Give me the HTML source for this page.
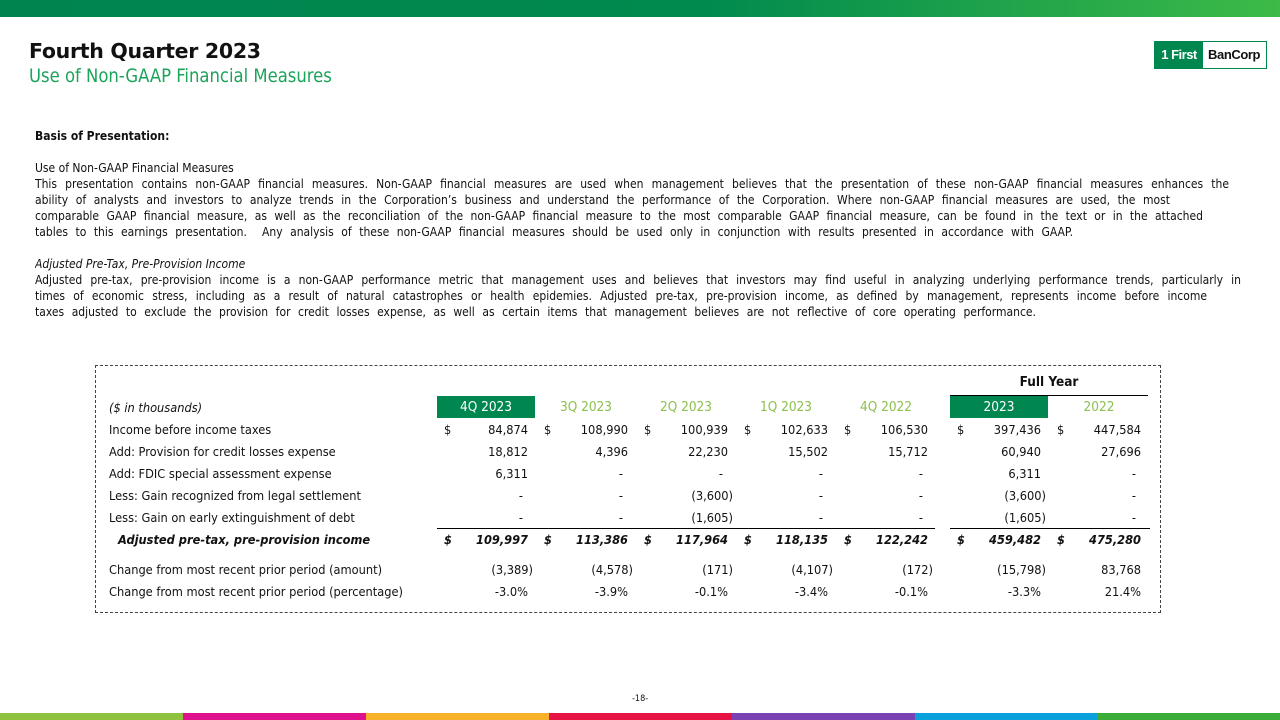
<!DOCTYPE html>
<html><head><meta charset="utf-8"><style>
*{margin:0;padding:0;box-sizing:border-box}
body{width:1280px;height:720px;position:relative;overflow:hidden;background:#fff;font-family:"DejaVu Sans Condensed","Liberation Sans",sans-serif;color:#111}
.a{position:absolute;white-space:nowrap}
.top{position:absolute;left:0;top:0;width:1280px;height:17px;background:linear-gradient(90deg,#00844f 0%,#008a4e 55%,#3dba48 100%)}
.t1{left:29px;top:39px;font-size:20.5px;font-weight:bold;font-family:"DejaVu Sans","Liberation Sans",sans-serif;letter-spacing:-0.3px}
.t2{left:29px;top:66px;font-size:18.3px;color:#1ba35a;font-family:"DejaVu Sans Condensed",sans-serif}
.p{position:absolute;left:35px;font-size:12px;line-height:16px;white-space:nowrap;text-align:justify;text-align-last:justify;overflow:hidden}
.box{position:absolute;left:95px;top:365px;width:1066px;height:248px;border:1px dashed #444}
.c{position:absolute;font-size:12.7px;height:22px;line-height:22px}
.hd{position:absolute;width:98px;height:22px;line-height:22px;text-align:center;font-size:13.5px;color:#8cc04f}
.g{background:#00874f;color:#fff}
.ln{position:absolute;height:1px;background:#000}
.bars div{position:absolute;top:713px;height:7px;width:183px}
</style></head><body>
<div class="top"></div>
<div class="a t1">Fourth Quarter 2023</div>
<div class="a t2">Use of Non-GAAP Financial Measures</div>
<div class="a" style="left:1154px;top:41px;width:113px;height:28px;border:1px solid #00874f;background:#fff">
<div style="position:absolute;left:0;top:0;width:48px;height:26px;background:#00874f;color:#fff;font:bold 13px/26px 'Liberation Sans',sans-serif;text-align:center;letter-spacing:-0.5px">1 First</div>
<div style="position:absolute;left:53px;top:0;font:bold 13px/26px 'Liberation Sans',sans-serif;color:#111;letter-spacing:-0.4px">BanCorp</div></div>

<div class="p" style="top:128px;font-weight:bold">Basis of Presentation:</div>
<div class="p" style="top:160px">Use of Non-GAAP Financial Measures</div>
<div class="p" style="top:176px;width:1194px">This presentation contains non-GAAP financial measures. Non-GAAP financial measures are used when management believes that the presentation of these non-GAAP financial measures enhances the</div>
<div class="p" style="top:192px;width:1135px">ability of analysts and investors to analyze trends in the Corporation’s business and understand the performance of the Corporation. Where non-GAAP financial measures are used, the most</div>
<div class="p" style="top:208px;width:1168px">comparable GAAP financial measure, as well as the reconciliation of the non-GAAP financial measure to the most comparable GAAP financial measure, can be found in the text or in the attached</div>
<div class="p" style="top:224px;width:1038px">tables to this earnings presentation.&nbsp; Any analysis of these non-GAAP financial measures should be used only in conjunction with results presented in accordance with GAAP.</div>
<div class="p" style="top:256px;font-style:italic">Adjusted Pre-Tax, Pre-Provision Income</div>
<div class="p" style="top:272px;width:1206px">Adjusted pre-tax, pre-provision income is a non-GAAP performance metric that management uses and believes that investors may find useful in analyzing underlying performance trends, particularly in</div>
<div class="p" style="top:288px;width:1172px">times of economic stress, including as a result of natural catastrophes or health epidemies. Adjusted pre-tax, pre-provision income, as defined by management, represents income before income</div>
<div class="p" style="top:304px;width:1001px">taxes adjusted to exclude the provision for credit losses expense, as well as certain items that management believes are not reflective of core operating performance.</div>

<div class="box"></div>
<div class="a" style="left:950px;top:374px;width:198px;text-align:center;font-size:13.5px;font-weight:bold">Full Year</div>
<div class="ln" style="left:950px;top:395px;width:198px"></div>
<div class="a c" style="left:109px;top:397px;font-style:italic">($ in thousands)</div>
<div class="hd g" style="left:437px;top:396px">4Q 2023</div>
<div class="hd" style="left:537px;top:396px">3Q 2023</div>
<div class="hd" style="left:637px;top:396px">2Q 2023</div>
<div class="hd" style="left:737px;top:396px">1Q 2023</div>
<div class="hd" style="left:837px;top:396px">4Q 2022</div>
<div class="hd g" style="left:950px;top:396px">2023</div>
<div class="hd" style="left:1050px;top:396px">2022</div>
<div class="ln" style="left:437px;top:528px;width:498px"></div>
<div class="ln" style="left:950px;top:528px;width:200px"></div>
<div id="t"></div>
<div class="a" style="left:632px;top:694px;font-size:9px">-18-</div>
<div class="bars">
<div style="left:0;background:#8dc33f"></div><div style="left:183px;background:#e0118c"></div><div style="left:366px;background:#f8b22a"></div><div style="left:549px;background:#e51444"></div><div style="left:732px;background:#7941b4"></div><div style="left:915px;background:#0aa0dc"></div><div style="left:1098px;width:182px;background:#3aac37"></div>
</div>
<script>
var cols=[437,537,637,737,837,950,1050];
var rows=[
["Income before income taxes",419,1,["84,874","108,990","100,939","102,633","106,530","397,436","447,584"]],
["Add: Provision for credit losses expense",441,0,["18,812","4,396","22,230","15,502","15,712","60,940","27,696"]],
["Add: FDIC special assessment expense",463,0,["6,311","-","-","-","-","6,311","-"]],
["Less: Gain recognized from legal settlement",485,0,["-","-","(3,600)","-","-","(3,600)","-"]],
["Less: Gain on early extinguishment of debt",507,0,["-","-","(1,605)","-","-","(1,605)","-"]],
["Adjusted pre-tax, pre-provision income",529,2,["109,997","113,386","117,964","118,135","122,242","459,482","475,280"]],
["Change from most recent prior period (amount)",559,0,["(3,389)","(4,578)","(171)","(4,107)","(172)","(15,798)","83,768"]],
["Change from most recent prior period (percentage)",581,0,["-3.0%","-3.9%","-0.1%","-3.4%","-0.1%","-3.3%","21.4%"]]];
var h="";
rows.forEach(function(r){
 var st=r[2]==2?"font-weight:bold;font-style:italic;":"";
 h+='<div class="a c" style="left:'+(r[2]==2?118:109)+'px;top:'+r[1]+'px;'+st+'">'+r[0]+'</div>';
 r[3].forEach(function(v,i){
  var x=cols[i];
  if(r[2]) h+='<div class="a c" style="left:'+(x+7)+'px;top:'+r[1]+'px;'+st+'">$</div>';
  var pr=/\)$/.test(v)?2:(v=="-"?12:7);
  h+='<div class="a c" style="left:'+x+'px;width:'+(98-pr)+'px;text-align:right;top:'+r[1]+'px;'+st+'">'+v+'</div>';
 });
});
document.getElementById("t").innerHTML=h;
</script>
</body></html>
